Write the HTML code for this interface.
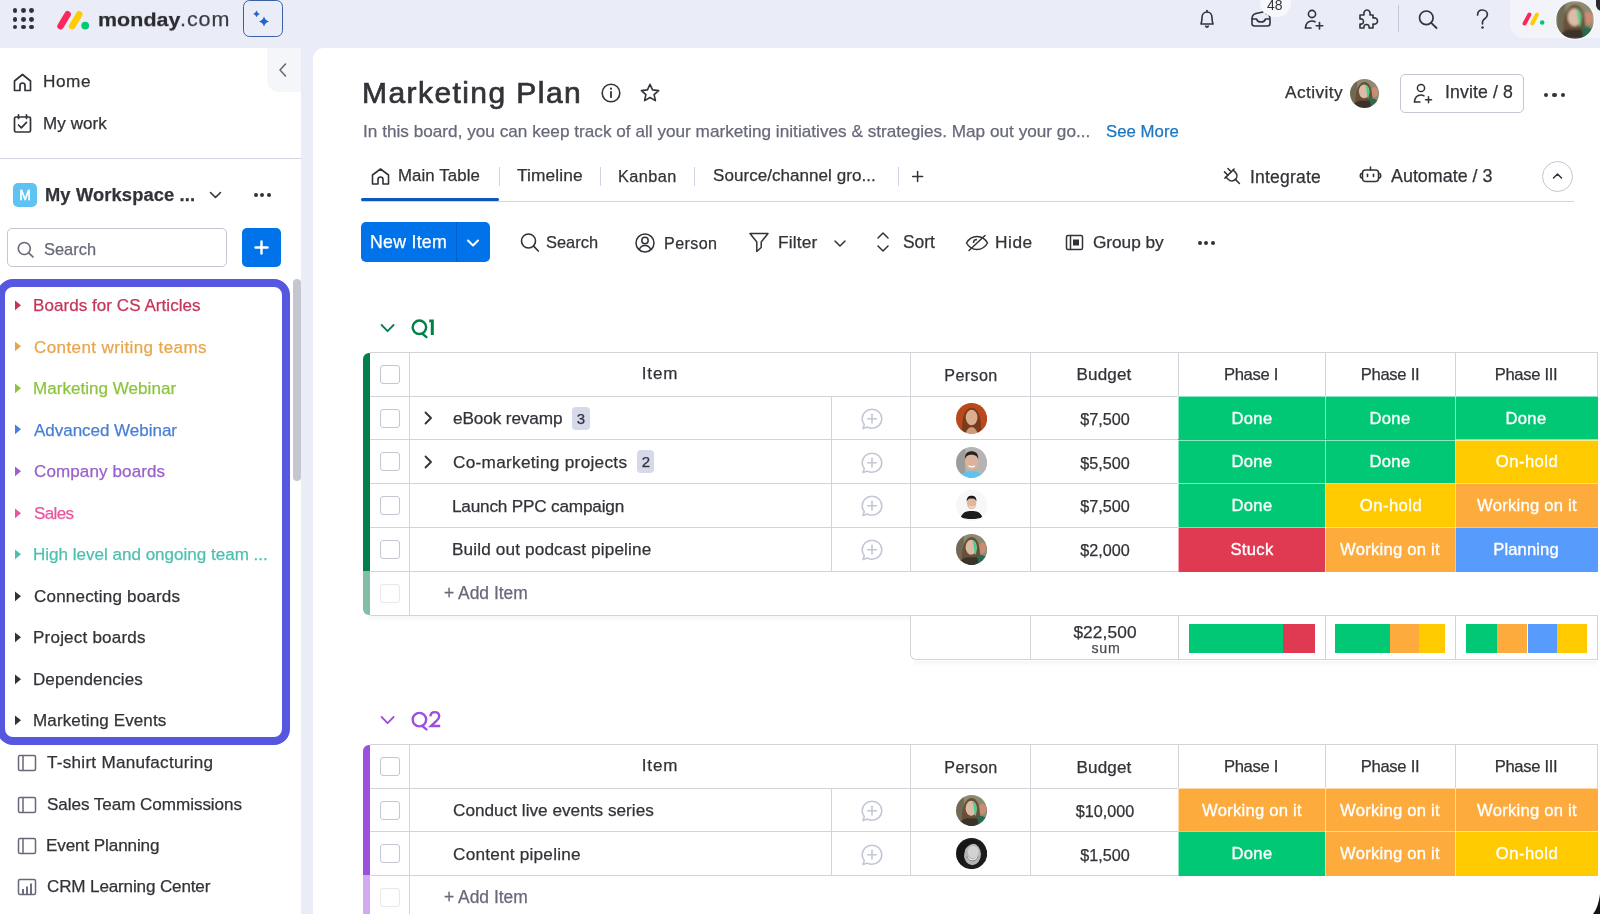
<!DOCTYPE html>
<html><head><meta charset="utf-8"><title>Marketing Plan</title>
<style>
html,body{margin:0;padding:0;width:1600px;height:914px;overflow:hidden;background:#eceff8;}
body{position:relative;font-family:"Liberation Sans",sans-serif;}
.t{position:absolute;line-height:1;white-space:nowrap;will-change:transform;-webkit-text-stroke:0.25px currentColor;}
.r{position:absolute;display:block;}
</style></head><body>
<div class="r" style="left:0.0px;top:0.0px;width:1600.0px;height:914.0px;background:#eaedf7;"></div>
<div class="r" style="left:0.0px;top:48.0px;width:301.0px;height:866.0px;background:#ffffff;"></div>
<div class="r" style="left:313.0px;top:48.0px;width:1287.0px;height:866.0px;background:#ffffff;border-top-left-radius:11px;"></div>
<div class="r" style="left:267.0px;top:48.0px;width:34.0px;height:44.0px;background:#f5f6fa;border-bottom-left-radius:12px;"></div>
<svg class="r" style="left:277.0px;top:62.0px;" width="12" height="16" viewBox="0 0 12 16"><path d="M8.5 2 L3 8 L8.5 14" fill="none" stroke="#676879" stroke-width="1.6" stroke-linecap="round" stroke-linejoin="round"/></svg>
<div class="r" style="left:12.6px;top:8.4px;width:4.8px;height:4.8px;border-radius:50%;background:#323338"></div>
<div class="r" style="left:20.9px;top:8.4px;width:4.8px;height:4.8px;border-radius:50%;background:#323338"></div>
<div class="r" style="left:29.1px;top:8.4px;width:4.8px;height:4.8px;border-radius:50%;background:#323338"></div>
<div class="r" style="left:12.6px;top:16.8px;width:4.8px;height:4.8px;border-radius:50%;background:#323338"></div>
<div class="r" style="left:20.9px;top:16.8px;width:4.8px;height:4.8px;border-radius:50%;background:#323338"></div>
<div class="r" style="left:29.1px;top:16.8px;width:4.8px;height:4.8px;border-radius:50%;background:#323338"></div>
<div class="r" style="left:12.6px;top:24.6px;width:4.8px;height:4.8px;border-radius:50%;background:#323338"></div>
<div class="r" style="left:20.9px;top:24.6px;width:4.8px;height:4.8px;border-radius:50%;background:#323338"></div>
<div class="r" style="left:29.1px;top:24.6px;width:4.8px;height:4.8px;border-radius:50%;background:#323338"></div>
<svg class="r" style="left:55.0px;top:8.0px;" width="38" height="24" viewBox="0 0 38 24"><line x1="5.6" y1="18.2" x2="12.6" y2="6.3" stroke="#fb275d" stroke-width="6.6" stroke-linecap="round"/>
<line x1="17.2" y1="18.2" x2="24.2" y2="6.3" stroke="#ffcc00" stroke-width="6.6" stroke-linecap="round"/>
<circle cx="30.2" cy="17.6" r="3.9" fill="#00ca72"/></svg>
<div class="t" style="left:97.50px;top:9.48px;font-size:21.4px;color:#2b2c31;font-weight:bold;letter-spacing:0.077px;transform:scaleY(0.86);transform-origin:0 84.6%;">monday</div>
<div class="t" style="left:179.50px;top:9.40px;font-size:21.5px;color:#3a3b40;font-weight:normal;letter-spacing:0.940px;transform:scaleY(0.92);transform-origin:0 84.6%;">.com</div>
<div class="r" style="left:243.4px;top:0.0px;width:39.2px;height:36.8px;background:transparent;border:1.9px solid #3a62a3;border-radius:6.5px;box-sizing:border-box;"></div>
<svg class="r" style="left:243.0px;top:0.0px;" width="40" height="37" viewBox="0 0 40 37"><path d="M13.5 10.5 Q14.248 13.152000000000001 16.9 13.9 Q14.248 14.648 13.5 17.3 Q12.752 14.648 10.1 13.9 Q12.752 13.152000000000001 13.5 10.5 Z" fill="#1d66cc"/><path d="M21 16.5 Q22.122 20.478 26.1 21.6 Q22.122 22.722 21 26.700000000000003 Q19.878 22.722 15.9 21.6 Q19.878 20.478 21 16.5 Z" fill="#1d66cc"/></svg>
<svg class="r" style="left:1196.0px;top:8.0px;" width="22" height="22" viewBox="0 0 22 22"><path d="M5 16 C5.5 14.5 6 13 6 9.5 C6 6.3 8.2 4 11 4 C13.8 4 16 6.3 16 9.5 C16 13 16.5 14.5 17 16 Z" fill="none" stroke="#323338" stroke-width="1.6" stroke-linejoin="round"/>
<path d="M9.5 17.5 C9.8 18.6 10.3 19.2 11 19.2 C11.7 19.2 12.2 18.6 12.5 17.5" fill="none" stroke="#323338" stroke-width="1.6"/>
<line x1="11" y1="2.5" x2="11" y2="4" stroke="#323338" stroke-width="1.6" stroke-linecap="round"/></svg>
<svg class="r" style="left:1249.0px;top:10.0px;" width="24" height="18" viewBox="0 0 24 18"><path d="M3 9 L3 13.5 C3 15 4 16 5.5 16 L18.5 16 C20 16 21 15 21 13.5 L21 9 C21 6 19.5 4 17 3.5" fill="none" stroke="#323338" stroke-width="1.6" stroke-linecap="round"/>
<path d="M7 3.5 C4.5 4 3 6 3 9 L7.5 9 C8 11 9.5 12 12 12 C14.5 12 16 11 16.5 9 L21 9" fill="none" stroke="#323338" stroke-width="1.6" stroke-linejoin="round"/>
<line x1="7" y1="3.5" x2="14" y2="2" stroke="#323338" stroke-width="1.6" stroke-linecap="round"/></svg>
<div class="r" style="left:1260.0px;top:-12.0px;width:31.0px;height:29.0px;background:#f7f8fc;border-radius:15px;"></div>
<div class="t" style="left:1266.50px;top:-1.55px;font-size:14px;color:#323338;font-weight:normal;-webkit-text-stroke:0;">48</div>
<svg class="r" style="left:1302.0px;top:8.0px;" width="24" height="22" viewBox="0 0 24 22"><circle cx="10" cy="6" r="3.6" fill="none" stroke="#323338" stroke-width="1.6"/>
<path d="M3.5 20 C3.8 15.5 6.5 13 10 13 C11.2 13 12.2 13.3 13 13.8" fill="none" stroke="#323338" stroke-width="1.6" stroke-linecap="round"/>
<line x1="3.5" y1="20" x2="9" y2="20" stroke="#323338" stroke-width="1.6" stroke-linecap="round"/>
<line x1="17.5" y1="14.5" x2="17.5" y2="21" stroke="#323338" stroke-width="1.6" stroke-linecap="round"/>
<line x1="14.2" y1="17.7" x2="20.8" y2="17.7" stroke="#323338" stroke-width="1.6" stroke-linecap="round"/></svg>
<svg class="r" style="left:1356.0px;top:7.0px;" width="24" height="24" viewBox="0 0 24 24"><path d="M4 8 L8 8 C7.5 5.5 8.5 3 11 3 C13.5 3 14.5 5.5 14 8 L17 8 L17 11 C19.5 10.5 21.5 11.5 21.5 14 C21.5 16.5 19.5 17.5 17 17 L17 21 L13 21 C13.5 19 12.5 17.5 10.5 17.5 C8.5 17.5 7.5 19 8 21 L4 21 L4 17 C6 17.5 7.5 16.5 7.5 14.5 C7.5 12.5 6 11.5 4 12 Z" fill="none" stroke="#323338" stroke-width="1.6" stroke-linejoin="round"/></svg>
<div class="r" style="left:1397.5px;top:5.0px;width:1.3px;height:27.0px;background:#c3c6d4;"></div>
<svg class="r" style="left:1416.0px;top:8.0px;" width="24" height="24" viewBox="0 0 24 24"><circle cx="10.3" cy="9.8" r="6.8" fill="none" stroke="#323338" stroke-width="1.7"/>
<line x1="15.2" y1="14.8" x2="20.5" y2="20" stroke="#323338" stroke-width="1.8" stroke-linecap="round"/></svg>
<svg class="r" style="left:1472.0px;top:7.0px;" width="20" height="24" viewBox="0 0 20 24"><path d="M5.6 8 C5.6 4.8 7.8 3 10.5 3 C13.3 3 15.4 4.9 15.4 7.6 C15.4 10.4 13.3 11.4 11.8 12.6 C10.9 13.3 10.5 14 10.5 15.2 L10.5 16.8" fill="none" stroke="#323338" stroke-width="1.7" stroke-linecap="round"/>
<circle cx="10.5" cy="20.4" r="1.25" fill="#323338"/></svg>
<div class="r" style="left:1510.0px;top:-12.0px;width:110.0px;height:49.5px;background:#f3f4fa;border-radius:14px;"></div>
<svg class="r" style="left:1521.0px;top:10.0px;" width="26" height="17" viewBox="0 0 26 17"><line x1="3.6" y1="13.5" x2="8.4" y2="4.5" stroke="#fb275d" stroke-width="4" stroke-linecap="round"/>
<line x1="11.2" y1="13.5" x2="16" y2="4.5" stroke="#ffcc00" stroke-width="4" stroke-linecap="round"/>
<circle cx="21.2" cy="12.5" r="2.3" fill="#00ca72"/></svg>
<div class="r" style="left:1555.0px;top:0.3px;width:39.5px;height:39.5px;background:#ffffff;border-radius:50%;opacity:0.7;"></div>
<svg class="r" style="left:1555.70px;top:0.80px;" width="38.00" height="38.00" viewBox="0 0 40 40"><defs><filter id="b1" x="-20%" y="-20%" width="140%" height="140%"><feGaussianBlur stdDeviation="0.9"/></filter><clipPath id="c1"><circle cx="20" cy="20" r="20"/></clipPath></defs><g clip-path="url(#c1)"><g filter="url(#b1)"><rect width="40" height="40" fill="#8d8a72"/>
<rect x="0" y="0" width="10" height="40" fill="#6f6a55"/>
<ellipse cx="34" cy="18" rx="5" ry="7" fill="#c98c74"/>
<path d="M8 40 C6 24 9 5 20 4 C30 5 32 20 30 40 Z" fill="#6a5038"/>
<ellipse cx="19.5" cy="17" rx="7.2" ry="9.5" fill="#dcbca6"/>
<path d="M21 8 C27 10 28 20 25 27 C23 26 24 16 21 8Z" fill="#45d08f"/>
<path d="M3 40 C5 32 12 29 20 30 C28 29 33 31 36 40Z" fill="#3b332c"/>
<path d="M27 27 C32 26 38 28 40 32 L40 40 L29 40Z" fill="#2c6a50"/></g></g></svg>
<div class="r" style="left:1595.5px;top:-2.0px;width:6.5px;height:13.0px;background:#2a2a30;border-radius:0 0 0 6px;"></div>
<svg class="r" style="left:12.0px;top:72.0px;" width="21" height="21" viewBox="0 0 21 21"><path d="M2.5 18.5 L2.5 9 L10.5 2.5 L18.5 9 L18.5 18.5 L13 18.5 L13 13.5 C13 12 12 11 10.5 11 C9 11 8 12 8 13.5 L8 18.5 Z" fill="none" stroke="#323338" stroke-width="1.7" stroke-linejoin="round"/></svg>
<div class="t" style="left:43.00px;top:72.84px;font-size:17.2px;color:#323338;font-weight:normal;letter-spacing:0.571px;">Home</div>
<svg class="r" style="left:12.0px;top:113.0px;" width="21" height="21" viewBox="0 0 21 21"><rect x="2.5" y="4" width="16" height="15" rx="1.5" fill="none" stroke="#323338" stroke-width="1.7"/>
<line x1="6.5" y1="1.8" x2="6.5" y2="5.5" stroke="#323338" stroke-width="1.7" stroke-linecap="round"/>
<line x1="14.5" y1="1.8" x2="14.5" y2="5.5" stroke="#323338" stroke-width="1.7" stroke-linecap="round"/>
<path d="M6.5 12 L9.3 14.8 L14.5 9.3" fill="none" stroke="#323338" stroke-width="1.7" stroke-linecap="round" stroke-linejoin="round"/></svg>
<div class="t" style="left:43.00px;top:114.81px;font-size:17px;color:#323338;font-weight:normal;letter-spacing:0.087px;">My work</div>
<div class="r" style="left:0.0px;top:158.1px;width:301.0px;height:1.2px;background:#d5d7e0;"></div>
<div class="r" style="left:13.0px;top:183.0px;width:24.0px;height:24.0px;background:#5ec2f2;border-radius:5px;"></div>
<div class="t" style="left:9.83px;width:30px;text-align:center;top:188.15px;font-size:14px;color:#ffffff;font-weight:normal;-webkit-text-stroke:0.5px #fff;">M</div>
<div class="t" style="left:45.00px;top:185.71px;font-size:18.3px;color:#323338;font-weight:bold;letter-spacing:0.139px;">My Workspace ...</div>
<svg class="r" style="left:208.0px;top:189.0px;" width="15" height="12" viewBox="0 0 15 12"><path d="M2.5 3.5 L7.5 8.5 L12.5 3.5" fill="none" stroke="#323338" stroke-width="1.6" stroke-linecap="round" stroke-linejoin="round"/></svg>
<div class="r" style="left:253.5px;top:193.2px;width:4.0px;height:4.0px;background:#323338;border-radius:50%;"></div>
<div class="r" style="left:260.3px;top:193.2px;width:4.0px;height:4.0px;background:#323338;border-radius:50%;"></div>
<div class="r" style="left:267.0px;top:193.2px;width:4.0px;height:4.0px;background:#323338;border-radius:50%;"></div>
<div class="r" style="left:7.0px;top:228.3px;width:220.3px;height:39.2px;background:#ffffff;border:1px solid #c3c6d4;border-radius:5px;box-sizing:border-box;"></div>
<svg class="r" style="left:15.0px;top:240.0px;" width="22" height="20" viewBox="0 0 22 20"><circle cx="9.3" cy="8.5" r="6" fill="none" stroke="#676879" stroke-width="1.6"/>
<line x1="13.6" y1="12.8" x2="18" y2="17" stroke="#676879" stroke-width="1.7" stroke-linecap="round"/></svg>
<div class="t" style="left:43.80px;top:240.62px;font-size:16.4px;color:#676879;font-weight:normal;letter-spacing:0.037px;">Search</div>
<div class="r" style="left:242.0px;top:227.8px;width:39.0px;height:39.7px;background:#0073ea;border-radius:5px;"></div>
<svg class="r" style="left:251.0px;top:237.0px;" width="21" height="21" viewBox="0 0 21 21"><line x1="10.5" y1="4.5" x2="10.5" y2="16.5" stroke="#fff" stroke-width="2.4" stroke-linecap="round"/>
<line x1="4.5" y1="10.5" x2="16.5" y2="10.5" stroke="#fff" stroke-width="2.4" stroke-linecap="round"/></svg>
<div class="r" style="left:293.4px;top:279.0px;width:7.3px;height:202.0px;background:#c5c7d0;border-radius:4px;"></div>
<svg class="r" style="left:14.0px;top:299.8px;" width="8" height="11" viewBox="0 0 8 11"><path d="M1 0.5 L7 5.3 L1 10.2 Z" fill="#c63558"/></svg>
<div class="t" style="left:32.90px;top:296.97px;font-size:17.05px;color:#c63558;font-weight:normal;letter-spacing:0.047px;">Boards for CS Articles</div>
<svg class="r" style="left:14.0px;top:341.4px;" width="8" height="11" viewBox="0 0 8 11"><path d="M1 0.5 L7 5.3 L1 10.2 Z" fill="#e9a54e"/></svg>
<div class="t" style="left:33.90px;top:338.52px;font-size:17.05px;color:#e9a54e;font-weight:normal;letter-spacing:0.390px;">Content writing teams</div>
<svg class="r" style="left:14.0px;top:382.9px;" width="8" height="11" viewBox="0 0 8 11"><path d="M1 0.5 L7 5.3 L1 10.2 Z" fill="#8cc43e"/></svg>
<div class="t" style="left:32.90px;top:380.07px;font-size:17.05px;color:#8cc43e;font-weight:normal;letter-spacing:0.028px;">Marketing Webinar</div>
<svg class="r" style="left:14.0px;top:424.4px;" width="8" height="11" viewBox="0 0 8 11"><path d="M1 0.5 L7 5.3 L1 10.2 Z" fill="#4a7fd6"/></svg>
<div class="t" style="left:33.90px;top:421.62px;font-size:17.05px;color:#4a7fd6;font-weight:normal;letter-spacing:-0.041px;">Advanced Webinar</div>
<svg class="r" style="left:14.0px;top:466.0px;" width="8" height="11" viewBox="0 0 8 11"><path d="M1 0.5 L7 5.3 L1 10.2 Z" fill="#9a5fcc"/></svg>
<div class="t" style="left:33.90px;top:463.17px;font-size:17.05px;color:#9a5fcc;font-weight:normal;letter-spacing:0.109px;">Company boards</div>
<svg class="r" style="left:14.0px;top:507.5px;" width="8" height="11" viewBox="0 0 8 11"><path d="M1 0.5 L7 5.3 L1 10.2 Z" fill="#e8569f"/></svg>
<div class="t" style="left:33.90px;top:504.72px;font-size:17.05px;color:#e8569f;font-weight:normal;letter-spacing:-0.647px;">Sales</div>
<svg class="r" style="left:14.0px;top:549.1px;" width="8" height="11" viewBox="0 0 8 11"><path d="M1 0.5 L7 5.3 L1 10.2 Z" fill="#4cc0b0"/></svg>
<div class="t" style="left:32.90px;top:546.27px;font-size:17.05px;color:#4cc0b0;font-weight:normal;letter-spacing:-0.002px;">High level and ongoing team ...</div>
<svg class="r" style="left:14.0px;top:590.6px;" width="8" height="11" viewBox="0 0 8 11"><path d="M1 0.5 L7 5.3 L1 10.2 Z" fill="#323338"/></svg>
<div class="t" style="left:33.90px;top:587.82px;font-size:17.05px;color:#323338;font-weight:normal;letter-spacing:0.190px;">Connecting boards</div>
<svg class="r" style="left:14.0px;top:632.2px;" width="8" height="11" viewBox="0 0 8 11"><path d="M1 0.5 L7 5.3 L1 10.2 Z" fill="#323338"/></svg>
<div class="t" style="left:32.90px;top:629.37px;font-size:17.05px;color:#323338;font-weight:normal;letter-spacing:0.208px;">Project boards</div>
<svg class="r" style="left:14.0px;top:673.8px;" width="8" height="11" viewBox="0 0 8 11"><path d="M1 0.5 L7 5.3 L1 10.2 Z" fill="#323338"/></svg>
<div class="t" style="left:32.90px;top:670.92px;font-size:17.05px;color:#323338;font-weight:normal;letter-spacing:0.075px;">Dependencies</div>
<svg class="r" style="left:14.0px;top:715.3px;" width="8" height="11" viewBox="0 0 8 11"><path d="M1 0.5 L7 5.3 L1 10.2 Z" fill="#323338"/></svg>
<div class="t" style="left:32.90px;top:712.47px;font-size:17.05px;color:#323338;font-weight:normal;letter-spacing:0.116px;">Marketing Events</div>
<div class="r" style="left:-3.0px;top:279.0px;width:292.5px;height:466.3px;background:transparent;border:8px solid #5657e0;border-radius:16px;box-sizing:border-box;"></div>
<svg class="r" style="left:16.5px;top:754.2px;" width="21" height="18" viewBox="0 0 21 18"><rect x="1.5" y="1.5" width="17" height="15" rx="1.5" fill="none" stroke="#676879" stroke-width="1.5"/>
<line x1="6" y1="1.5" x2="6" y2="16.5" stroke="#676879" stroke-width="1.5"/></svg>
<div class="t" style="left:47.10px;top:754.22px;font-size:17.1px;color:#323338;font-weight:normal;letter-spacing:0.273px;">T-shirt Manufacturing</div>
<svg class="r" style="left:16.5px;top:795.6px;" width="21" height="18" viewBox="0 0 21 18"><rect x="1.5" y="1.5" width="17" height="15" rx="1.5" fill="none" stroke="#676879" stroke-width="1.5"/>
<line x1="6" y1="1.5" x2="6" y2="16.5" stroke="#676879" stroke-width="1.5"/></svg>
<div class="t" style="left:47.10px;top:795.62px;font-size:17.1px;color:#323338;font-weight:normal;letter-spacing:-0.061px;">Sales Team Commissions</div>
<svg class="r" style="left:16.5px;top:837.0px;" width="21" height="18" viewBox="0 0 21 18"><rect x="1.5" y="1.5" width="17" height="15" rx="1.5" fill="none" stroke="#676879" stroke-width="1.5"/>
<line x1="6" y1="1.5" x2="6" y2="16.5" stroke="#676879" stroke-width="1.5"/></svg>
<div class="t" style="left:46.10px;top:837.02px;font-size:17.1px;color:#323338;font-weight:normal;letter-spacing:-0.114px;">Event Planning</div>
<svg class="r" style="left:16.5px;top:878.4px;" width="21" height="18" viewBox="0 0 21 18"><rect x="1.5" y="1.5" width="17" height="15" rx="1.5" fill="none" stroke="#676879" stroke-width="1.5"/>
<line x1="6" y1="16" x2="6" y2="11" stroke="#676879" stroke-width="1.9"/>
<line x1="10" y1="16" x2="10" y2="8.5" stroke="#676879" stroke-width="1.9"/>
<line x1="14" y1="16" x2="14" y2="5.5" stroke="#676879" stroke-width="1.9"/></svg>
<div class="t" style="left:47.10px;top:878.42px;font-size:17.1px;color:#323338;font-weight:normal;letter-spacing:-0.160px;">CRM Learning Center</div>
<div class="t" style="left:361.60px;top:78.01px;font-size:30px;color:#323338;font-weight:normal;letter-spacing:1.430px;-webkit-text-stroke:0.7px #323338;">Marketing Plan</div>
<svg class="r" style="left:600.0px;top:82.0px;" width="22" height="22" viewBox="0 0 22 22"><circle cx="11" cy="11" r="8.8" fill="none" stroke="#323338" stroke-width="1.6"/>
<line x1="11" y1="9.8" x2="11" y2="15.2" stroke="#323338" stroke-width="1.8" stroke-linecap="round"/>
<circle cx="11" cy="6.7" r="1.1" fill="#323338"/></svg>
<svg class="r" style="left:639.0px;top:82.0px;" width="22" height="22" viewBox="0 0 22 22"><path d="M11 2.3 L13.6 7.9 L19.6 8.6 L15.1 12.6 L16.4 18.6 L11 15.5 L5.6 18.6 L6.9 12.6 L2.4 8.6 L8.4 7.9 Z" fill="none" stroke="#323338" stroke-width="1.6" stroke-linejoin="round"/></svg>
<div class="t" style="left:363.00px;top:123.28px;font-size:17.15px;color:#676879;font-weight:normal;letter-spacing:0.023px;">In this board, you can keep track of all your marketing initiatives &amp; strategies. Map out your go...</div>
<div class="t" style="left:1106.00px;top:123.62px;font-size:16.75px;color:#1f76c2;font-weight:normal;letter-spacing:0.042px;">See More</div>
<div class="t" style="left:1285.00px;top:84.16px;font-size:17.3px;color:#323338;font-weight:normal;letter-spacing:0.416px;">Activity</div>
<svg class="r" style="left:1350.00px;top:79.00px;" width="29.00" height="29.00" viewBox="0 0 40 40"><defs><filter id="b2" x="-20%" y="-20%" width="140%" height="140%"><feGaussianBlur stdDeviation="0.9"/></filter><clipPath id="c2"><circle cx="20" cy="20" r="20"/></clipPath></defs><g clip-path="url(#c2)"><g filter="url(#b2)"><rect width="40" height="40" fill="#8d8a72"/>
<rect x="0" y="0" width="10" height="40" fill="#6f6a55"/>
<ellipse cx="34" cy="18" rx="5" ry="7" fill="#c98c74"/>
<path d="M8 40 C6 24 9 5 20 4 C30 5 32 20 30 40 Z" fill="#6a5038"/>
<ellipse cx="19.5" cy="17" rx="7.2" ry="9.5" fill="#dcbca6"/>
<path d="M21 8 C27 10 28 20 25 27 C23 26 24 16 21 8Z" fill="#45d08f"/>
<path d="M3 40 C5 32 12 29 20 30 C28 29 33 31 36 40Z" fill="#3b332c"/>
<path d="M27 27 C32 26 38 28 40 32 L40 40 L29 40Z" fill="#2c6a50"/></g></g></svg>
<div class="r" style="left:1400.4px;top:74.0px;width:124.0px;height:38.6px;background:#ffffff;border:1px solid #c3c6d4;border-radius:5px;box-sizing:border-box;"></div>
<svg class="r" style="left:1411.0px;top:82.0px;" width="24" height="22" viewBox="0 0 24 22"><circle cx="10" cy="6" r="3.6" fill="none" stroke="#323338" stroke-width="1.5"/>
<path d="M3.5 20 C3.8 15.5 6.5 13 10 13 C11.2 13 12.2 13.3 13 13.8" fill="none" stroke="#323338" stroke-width="1.5" stroke-linecap="round"/>
<line x1="3.5" y1="20" x2="9" y2="20" stroke="#323338" stroke-width="1.5" stroke-linecap="round"/>
<line x1="17.5" y1="14.8" x2="17.5" y2="20.8" stroke="#323338" stroke-width="1.5" stroke-linecap="round"/>
<line x1="14.5" y1="17.8" x2="20.5" y2="17.8" stroke="#323338" stroke-width="1.5" stroke-linecap="round"/></svg>
<div class="t" style="left:1445.00px;top:83.82px;font-size:17.7px;color:#323338;font-weight:normal;letter-spacing:0.109px;">Invite / 8</div>
<div class="r" style="left:1543.9px;top:92.9px;width:4.2px;height:4.2px;background:#323338;border-radius:50%;"></div>
<div class="r" style="left:1552.4px;top:92.9px;width:4.2px;height:4.2px;background:#323338;border-radius:50%;"></div>
<div class="r" style="left:1560.9px;top:92.9px;width:4.2px;height:4.2px;background:#323338;border-radius:50%;"></div>
<svg class="r" style="left:370.0px;top:167.0px;" width="21" height="19" viewBox="0 0 21 19"><path d="M2.5 17 L2.5 8 L10.5 2 L18.5 8 L18.5 17 L13 17 L13 12.5 C13 11 12 10 10.5 10 C9 10 8 11 8 12.5 L8 17 Z" fill="none" stroke="#323338" stroke-width="1.6" stroke-linejoin="round"/></svg>
<div class="t" style="left:398.00px;top:167.58px;font-size:16.8px;color:#323338;font-weight:normal;letter-spacing:0.109px;">Main Table</div>
<div class="r" style="left:499.0px;top:167.0px;width:1.2px;height:18.6px;background:#d0d4e4;"></div>
<div class="t" style="left:517.00px;top:167.11px;font-size:17.35px;color:#323338;font-weight:normal;letter-spacing:0.107px;">Timeline</div>
<div class="r" style="left:600.3px;top:167.0px;width:1.2px;height:18.6px;background:#d0d4e4;"></div>
<div class="t" style="left:618.30px;top:168.00px;font-size:16.3px;color:#323338;font-weight:normal;letter-spacing:0.424px;">Kanban</div>
<div class="r" style="left:694.0px;top:167.0px;width:1.2px;height:18.6px;background:#d0d4e4;"></div>
<div class="t" style="left:712.70px;top:167.37px;font-size:17.05px;color:#323338;font-weight:normal;letter-spacing:0.042px;">Source/channel gro...</div>
<div class="r" style="left:898.2px;top:167.0px;width:1.2px;height:18.6px;background:#d0d4e4;"></div>
<svg class="r" style="left:910.0px;top:169.0px;" width="15" height="15" viewBox="0 0 15 15"><line x1="7.6" y1="2.5" x2="7.6" y2="12.5" stroke="#323338" stroke-width="1.5" stroke-linecap="round"/>
<line x1="2.6" y1="7.5" x2="12.6" y2="7.5" stroke="#323338" stroke-width="1.5" stroke-linecap="round"/></svg>
<div class="r" style="left:360.6px;top:200.6px;width:1213.2px;height:1.4px;background:#d4d5db;"></div>
<div class="r" style="left:360.6px;top:198.1px;width:138.4px;height:3.1px;background:#0b57c0;border-radius:2px;"></div>
<svg class="r" style="left:1220.0px;top:163.5px;" width="24" height="24" viewBox="0 0 24 24"><g transform="rotate(-45 12 12)" fill="none" stroke="#323338" stroke-width="1.5" stroke-linecap="round" stroke-linejoin="round">
<line x1="5.5" y1="8.5" x2="18.5" y2="8.5"/>
<path d="M7 8.5 V11.5 C7 14.8 9.3 16.8 12 16.8 C14.7 16.8 17 14.8 17 11.5 V8.5"/>
<line x1="9.6" y1="8.5" x2="9.6" y2="3.8"/><line x1="14.4" y1="8.5" x2="14.4" y2="3.8"/>
<line x1="12" y1="16.8" x2="12" y2="22.5"/></g></svg>
<div class="t" style="left:1250.00px;top:168.69px;font-size:17.5px;color:#323338;font-weight:normal;letter-spacing:0.207px;">Integrate</div>
<svg class="r" style="left:1358.0px;top:164.5px;" width="25" height="20" viewBox="0 0 25 20"><rect x="4.5" y="5" width="16" height="11.5" rx="3" fill="none" stroke="#323338" stroke-width="1.5"/>
<line x1="12.5" y1="2" x2="12.5" y2="5" stroke="#323338" stroke-width="1.5" stroke-linecap="round"/>
<path d="M4.5 8.3 C2.8 8.3 2.3 9.5 2.3 10.7 C2.3 11.9 2.8 13.1 4.5 13.1" fill="none" stroke="#323338" stroke-width="1.5"/>
<path d="M20.5 8.3 C22.2 8.3 22.7 9.5 22.7 10.7 C22.7 11.9 22.2 13.1 20.5 13.1" fill="none" stroke="#323338" stroke-width="1.5"/>
<line x1="9.5" y1="9.3" x2="9.5" y2="11.5" stroke="#323338" stroke-width="1.6" stroke-linecap="round"/><line x1="15.5" y1="9.3" x2="15.5" y2="11.5" stroke="#323338" stroke-width="1.6" stroke-linecap="round"/></svg>
<div class="t" style="left:1391.00px;top:168.35px;font-size:17.9px;color:#323338;font-weight:normal;letter-spacing:0.001px;">Automate / 3</div>
<div class="r" style="left:1542.0px;top:160.5px;width:31.0px;height:31.0px;background:#ffffff;border:1px solid #c3c6d4;border-radius:50%;box-sizing:border-box;"></div>
<svg class="r" style="left:1550.0px;top:169.0px;" width="15" height="14" viewBox="0 0 15 14"><path d="M3.5 9 L7.5 5 L11.5 9" fill="none" stroke="#323338" stroke-width="1.5" stroke-linecap="round" stroke-linejoin="round"/></svg>
<div class="r" style="left:360.5px;top:222.0px;width:129.5px;height:40.0px;background:#0073ea;border-radius:5px;"></div>
<div class="r" style="left:455.5px;top:222.0px;width:1.3px;height:40.0px;background:#0060c4;"></div>
<div class="t" style="left:370.00px;top:233.57px;font-size:17.75px;color:#ffffff;font-weight:normal;letter-spacing:0.261px;">New Item</div>
<svg class="r" style="left:465.0px;top:236.0px;" width="16" height="14" viewBox="0 0 16 14"><path d="M3 4.5 L8 9.5 L13 4.5" fill="none" stroke="#ffffff" stroke-width="2" stroke-linecap="round" stroke-linejoin="round"/></svg>
<svg class="r" style="left:518.0px;top:231.0px;" width="24" height="24" viewBox="0 0 24 24"><circle cx="10.5" cy="10" r="7" fill="none" stroke="#323338" stroke-width="1.6"/>
<line x1="15.6" y1="15.2" x2="20.3" y2="20" stroke="#323338" stroke-width="1.7" stroke-linecap="round"/></svg>
<div class="t" style="left:545.50px;top:234.42px;font-size:16.4px;color:#323338;font-weight:normal;letter-spacing:0.037px;">Search</div>
<svg class="r" style="left:633.0px;top:231.0px;" width="24" height="24" viewBox="0 0 24 24"><circle cx="12" cy="12" r="9" fill="none" stroke="#323338" stroke-width="1.5"/>
<circle cx="12" cy="9.5" r="3.2" fill="none" stroke="#323338" stroke-width="1.5"/>
<path d="M6.3 18.8 C7.2 15.8 9.3 14.5 12 14.5 C14.7 14.5 16.8 15.8 17.7 18.8" fill="none" stroke="#323338" stroke-width="1.5"/></svg>
<div class="t" style="left:664.00px;top:234.67px;font-size:16.1px;color:#323338;font-weight:normal;letter-spacing:0.392px;">Person</div>
<svg class="r" style="left:747.0px;top:230.0px;" width="24" height="25" viewBox="0 0 24 25"><path d="M3 3.5 L21 3.5 L14.2 12 L14.2 17.5 L9.8 21.5 L9.8 12 Z" fill="none" stroke="#323338" stroke-width="1.5" stroke-linejoin="round"/></svg>
<div class="t" style="left:778.00px;top:233.66px;font-size:17.3px;color:#323338;font-weight:normal;letter-spacing:0.171px;">Filter</div>
<svg class="r" style="left:832.0px;top:238.0px;" width="16" height="11" viewBox="0 0 16 11"><path d="M3 3 L8 8 L13 3" fill="none" stroke="#323338" stroke-width="1.5" stroke-linecap="round" stroke-linejoin="round"/></svg>
<svg class="r" style="left:873.0px;top:230.0px;" width="20" height="24" viewBox="0 0 20 24"><path d="M5 8 L10 3 L15 8" fill="none" stroke="#323338" stroke-width="1.5" stroke-linecap="round" stroke-linejoin="round"/>
<path d="M5 16 L10 21 L15 16" fill="none" stroke="#323338" stroke-width="1.5" stroke-linecap="round" stroke-linejoin="round"/></svg>
<div class="t" style="left:902.50px;top:233.53px;font-size:17.45px;color:#323338;font-weight:normal;letter-spacing:-0.045px;">Sort</div>
<svg class="r" style="left:964.0px;top:233.0px;" width="26" height="20" viewBox="0 0 26 20"><path d="M2.5 10 C5 5.5 8.5 3.5 13 3.5 C17.5 3.5 21 5.5 23.5 10 C21 14.5 17.5 16.5 13 16.5 C8.5 16.5 5 14.5 2.5 10 Z" fill="none" stroke="#323338" stroke-width="1.5"/>
<path d="M9.5 10 C9.5 8 11 6.5 13 6.5" fill="none" stroke="#323338" stroke-width="1.5"/>
<line x1="5" y1="17.5" x2="21" y2="2.5" stroke="#323338" stroke-width="1.5" stroke-linecap="round"/></svg>
<div class="t" style="left:995.00px;top:233.66px;font-size:17.3px;color:#323338;font-weight:normal;letter-spacing:0.557px;">Hide</div>
<svg class="r" style="left:1064.0px;top:233.0px;" width="21" height="19" viewBox="0 0 21 19"><rect x="2.5" y="2.5" width="16" height="14" rx="1.5" fill="none" stroke="#323338" stroke-width="1.5"/>
<line x1="6.5" y1="2.5" x2="6.5" y2="16.5" stroke="#323338" stroke-width="1.5"/>
<rect x="9" y="6.5" width="6" height="6" fill="#323338"/></svg>
<div class="t" style="left:1093.00px;top:233.70px;font-size:17.25px;color:#323338;font-weight:normal;letter-spacing:-0.047px;">Group by</div>
<div class="r" style="left:1197.5px;top:241.0px;width:4.0px;height:4.0px;background:#323338;border-radius:50%;"></div>
<div class="r" style="left:1204.3px;top:241.0px;width:4.0px;height:4.0px;background:#323338;border-radius:50%;"></div>
<div class="r" style="left:1211.1px;top:241.0px;width:4.0px;height:4.0px;background:#323338;border-radius:50%;"></div>
<svg class="r" style="left:379.0px;top:321.5px;" width="17" height="12" viewBox="0 0 17 12"><path d="M2.6 3 L8.6 9.2 L14.6 3" fill="none" stroke="#037f4c" stroke-width="1.8" stroke-linecap="round" stroke-linejoin="round"/></svg>
<svg class="r" style="left:0;top:0;" width="460" height="352.5" viewBox="0 0 460 352.5"><circle cx="419.4" cy="327.3" r="6.75" fill="none" stroke="#037f4c" stroke-width="2.4"/><line x1="422.3" y1="333.7" x2="426.4" y2="337.1" stroke="#037f4c" stroke-width="2.4" stroke-linecap="round"/><path d="M429.2 319.5 L433.8 319.5 L433.8 335.0 L430.8 335.0 L430.8 322.2 L429.2 322.2 Z" fill="#037f4c"/></svg>
<div class="r" style="left:363.0px;top:352.5px;width:7.0px;height:218.8px;background:#037f4c;border-top-left-radius:6px;"></div>
<div class="r" style="left:363.0px;top:571.3px;width:7.0px;height:43.9px;background:#80bfa5;border-bottom-left-radius:6px;"></div>
<div class="r" style="left:370.0px;top:352.0px;width:1228.2px;height:1.2px;background:#d3d4da;"></div>
<div class="r" style="left:370.0px;top:396.0px;width:1228.2px;height:1.2px;background:#d3d4da;"></div>
<div class="r" style="left:370.0px;top:439.0px;width:1228.2px;height:1.2px;background:#d3d4da;"></div>
<div class="r" style="left:370.0px;top:483.0px;width:1228.2px;height:1.2px;background:#d3d4da;"></div>
<div class="r" style="left:370.0px;top:527.0px;width:1228.2px;height:1.2px;background:#d3d4da;"></div>
<div class="r" style="left:370.0px;top:571.0px;width:1228.2px;height:1.2px;background:#d3d4da;"></div>
<div class="r" style="left:370.0px;top:615.0px;width:1228.2px;height:1.2px;background:#d3d4da;"></div>
<div class="r" style="left:409.0px;top:352.5px;width:1.2px;height:218.8px;background:#d3d4da;"></div>
<div class="r" style="left:910.0px;top:352.5px;width:1.2px;height:218.8px;background:#d3d4da;"></div>
<div class="r" style="left:1030.0px;top:352.5px;width:1.2px;height:218.8px;background:#d3d4da;"></div>
<div class="r" style="left:1178.0px;top:352.5px;width:1.2px;height:218.8px;background:#d3d4da;"></div>
<div class="r" style="left:1325.0px;top:352.5px;width:1.2px;height:218.8px;background:#d3d4da;"></div>
<div class="r" style="left:1455.0px;top:352.5px;width:1.2px;height:218.8px;background:#d3d4da;"></div>
<div class="r" style="left:1597.0px;top:352.5px;width:1.2px;height:218.8px;background:#d3d4da;"></div>
<div class="r" style="left:409.0px;top:571.3px;width:1.2px;height:43.9px;background:#d3d4da;"></div>
<div class="r" style="left:831.0px;top:396.6px;width:1.2px;height:43.4px;background:#d3d4da;"></div>
<div class="r" style="left:831.0px;top:440.0px;width:1.2px;height:43.5px;background:#d3d4da;"></div>
<div class="r" style="left:831.0px;top:483.5px;width:1.2px;height:43.9px;background:#d3d4da;"></div>
<div class="r" style="left:831.0px;top:527.4px;width:1.2px;height:43.9px;background:#d3d4da;"></div>
<div class="r" style="left:380.3px;top:364.9px;width:19.3px;height:19.2px;background:#ffffff;border:1px solid #c5c7d0;border-radius:3px;box-sizing:border-box;"></div>
<div class="r" style="left:380.3px;top:408.7px;width:19.3px;height:19.2px;background:#ffffff;border:1px solid #c5c7d0;border-radius:3px;box-sizing:border-box;"></div>
<div class="r" style="left:380.3px;top:452.1px;width:19.3px;height:19.2px;background:#ffffff;border:1px solid #c5c7d0;border-radius:3px;box-sizing:border-box;"></div>
<div class="r" style="left:380.3px;top:495.8px;width:19.3px;height:19.2px;background:#ffffff;border:1px solid #c5c7d0;border-radius:3px;box-sizing:border-box;"></div>
<div class="r" style="left:380.3px;top:539.7px;width:19.3px;height:19.2px;background:#ffffff;border:1px solid #c5c7d0;border-radius:3px;box-sizing:border-box;"></div>
<div class="r" style="left:380.3px;top:583.6px;width:19.3px;height:19.2px;background:#ffffff;border:1px solid #e6e8ef;border-radius:3px;box-sizing:border-box;"></div>
<div class="t" style="left:510.00px;width:300px;text-align:center;top:364.81px;font-size:17px;color:#323338;font-weight:normal;letter-spacing:0.833px;">Item</div>
<div class="t" style="left:820.87px;width:300px;text-align:center;top:366.67px;font-size:16.1px;color:#323338;font-weight:normal;letter-spacing:0.392px;">Person</div>
<div class="t" style="left:954.04px;width:300px;text-align:center;top:366.37px;font-size:17.05px;color:#323338;font-weight:normal;letter-spacing:0.150px;">Budget</div>
<div class="t" style="left:1101.35px;width:300px;text-align:center;top:366.75px;font-size:16.6px;color:#323338;font-weight:normal;letter-spacing:-0.310px;">Phase I</div>
<div class="t" style="left:1240.06px;width:300px;text-align:center;top:366.75px;font-size:16.6px;color:#323338;font-weight:normal;letter-spacing:-0.282px;">Phase II</div>
<div class="t" style="left:1376.34px;width:300px;text-align:center;top:366.75px;font-size:16.6px;color:#323338;font-weight:normal;letter-spacing:-0.323px;">Phase III</div>
<svg class="r" style="left:421.0px;top:410.3px;" width="14" height="16" viewBox="0 0 14 16"><path d="M4.5 2.5 L10 8 L4.5 13.5" fill="none" stroke="#323338" stroke-width="1.8" stroke-linecap="round" stroke-linejoin="round"/></svg>
<div class="t" style="left:452.70px;top:410.44px;font-size:17.2px;color:#323338;font-weight:normal;letter-spacing:-0.115px;">eBook revamp</div>
<div class="r" style="left:572.3px;top:406.7px;width:17.5px;height:23.4px;background:#d6d9ea;border-radius:4px;"></div>
<div class="t" style="left:571.22px;width:20px;text-align:center;top:411.00px;font-size:15px;color:#323338;font-weight:normal;">3</div>
<svg class="r" style="left:858.7px;top:406.3px;" width="26" height="26" viewBox="0 0 26 26"><path d="M13 3.2 C18.6 3.2 22.8 7.4 22.8 12.7 C22.8 18 18.6 22.2 13 22.2 C11.3 22.2 9.8 21.8 8.4 21.1 L4 22.6 L5.3 18.6 C4 17 3.2 14.9 3.2 12.7 C3.2 7.4 7.4 3.2 13 3.2 Z" fill="none" stroke="#c3c6d4" stroke-width="1.6" stroke-linejoin="round"/>
<line x1="13" y1="8.3" x2="13" y2="17" stroke="#c3c6d4" stroke-width="1.6" stroke-linecap="round"/>
<line x1="8.6" y1="12.7" x2="17.4" y2="12.7" stroke="#c3c6d4" stroke-width="1.6" stroke-linecap="round"/></svg>
<svg class="r" style="left:955.70px;top:403.20px;" width="31.20" height="31.20" viewBox="0 0 40 40"><defs><filter id="b3" x="-20%" y="-20%" width="140%" height="140%"><feGaussianBlur stdDeviation="0.9"/></filter><clipPath id="c3"><circle cx="20" cy="20" r="20"/></clipPath></defs><g clip-path="url(#c3)"><g filter="url(#b3)"><rect width="40" height="40" fill="#b94a1e"/>
<path d="M8 40 C7 24 9 7 20 6 C31 7 33 24 32 40 Z" fill="#7a3b1f"/>
<ellipse cx="20" cy="18.5" rx="7.5" ry="10" fill="#dcae90"/>
<path d="M12 40 C14 33 17 31 20 31 C23 31 26 33 28 40Z" fill="#d19a78"/></g></g></svg>
<div class="t" style="left:954.50px;width:300px;text-align:center;top:411.29px;font-size:16.2px;color:#323338;font-weight:normal;">$7,500</div>
<div class="r" style="left:1178.0px;top:396.0px;width:147.9px;height:44.6px;background:#00c875;"></div>
<div class="r" style="left:1178.1px;top:396.1px;width:1.0px;height:44.4px;background:rgba(255,255,255,0.55);"></div>
<div class="r" style="left:1178.1px;top:396.1px;width:147.7px;height:1.0px;background:rgba(255,255,255,0.55);"></div>
<div class="t" style="left:1101.76px;width:300px;text-align:center;top:410.95px;font-size:16.6px;color:#ffffff;font-weight:normal;letter-spacing:0.386px;-webkit-text-stroke:0.35px #ffffff;">Done</div>
<div class="r" style="left:1324.7px;top:396.0px;width:131.6px;height:44.6px;background:#00c875;"></div>
<div class="r" style="left:1324.8px;top:396.1px;width:1.0px;height:44.4px;background:rgba(255,255,255,0.55);"></div>
<div class="r" style="left:1324.8px;top:396.1px;width:131.4px;height:1.0px;background:rgba(255,255,255,0.55);"></div>
<div class="t" style="left:1240.31px;width:300px;text-align:center;top:410.95px;font-size:16.6px;color:#ffffff;font-weight:normal;letter-spacing:0.386px;-webkit-text-stroke:0.35px #ffffff;">Done</div>
<div class="r" style="left:1455.1px;top:396.0px;width:143.1px;height:44.6px;background:#00c875;"></div>
<div class="r" style="left:1455.2px;top:396.1px;width:1.0px;height:44.4px;background:rgba(255,255,255,0.55);"></div>
<div class="r" style="left:1455.2px;top:396.1px;width:142.9px;height:1.0px;background:rgba(255,255,255,0.55);"></div>
<div class="t" style="left:1376.46px;width:300px;text-align:center;top:410.95px;font-size:16.6px;color:#ffffff;font-weight:normal;letter-spacing:0.386px;-webkit-text-stroke:0.35px #ffffff;">Done</div>
<svg class="r" style="left:421.0px;top:453.8px;" width="14" height="16" viewBox="0 0 14 16"><path d="M4.5 2.5 L10 8 L4.5 13.5" fill="none" stroke="#323338" stroke-width="1.8" stroke-linecap="round" stroke-linejoin="round"/></svg>
<div class="t" style="left:452.70px;top:453.89px;font-size:17.2px;color:#323338;font-weight:normal;letter-spacing:0.294px;">Co-marketing projects</div>
<div class="r" style="left:636.9px;top:450.1px;width:17.5px;height:23.4px;background:#d6d9ea;border-radius:4px;"></div>
<div class="t" style="left:635.82px;width:20px;text-align:center;top:454.45px;font-size:15px;color:#323338;font-weight:normal;">2</div>
<svg class="r" style="left:858.7px;top:449.8px;" width="26" height="26" viewBox="0 0 26 26"><path d="M13 3.2 C18.6 3.2 22.8 7.4 22.8 12.7 C22.8 18 18.6 22.2 13 22.2 C11.3 22.2 9.8 21.8 8.4 21.1 L4 22.6 L5.3 18.6 C4 17 3.2 14.9 3.2 12.7 C3.2 7.4 7.4 3.2 13 3.2 Z" fill="none" stroke="#c3c6d4" stroke-width="1.6" stroke-linejoin="round"/>
<line x1="13" y1="8.3" x2="13" y2="17" stroke="#c3c6d4" stroke-width="1.6" stroke-linecap="round"/>
<line x1="8.6" y1="12.7" x2="17.4" y2="12.7" stroke="#c3c6d4" stroke-width="1.6" stroke-linecap="round"/></svg>
<svg class="r" style="left:955.70px;top:446.65px;" width="31.20" height="31.20" viewBox="0 0 40 40"><defs><filter id="b4" x="-20%" y="-20%" width="140%" height="140%"><feGaussianBlur stdDeviation="0.9"/></filter><clipPath id="c4"><circle cx="20" cy="20" r="20"/></clipPath></defs><g clip-path="url(#c4)"><g filter="url(#b4)"><rect width="40" height="40" fill="#b5b4b3"/>
<rect x="0" y="0" width="12" height="40" fill="#9d9c9b"/>
<ellipse cx="20" cy="19" rx="8.5" ry="10.5" fill="#dcb29a"/>
<path d="M11.5 16 C11 8 15 5.5 20 5.5 C25 5.5 29 8 28.5 16 C27 11 24 10 20 10 C16 10 13 11 11.5 16Z" fill="#2a2420"/>
<path d="M16 24 C18 26 22 26 24 24" stroke="#ffffff" stroke-width="1.6" fill="none"/>
<path d="M4 40 C7 33 13 31 20 31 C27 31 33 33 36 40Z" fill="#5cc3ea"/></g></g></svg>
<div class="t" style="left:954.50px;width:300px;text-align:center;top:454.74px;font-size:16.2px;color:#323338;font-weight:normal;">$5,500</div>
<div class="r" style="left:1178.0px;top:439.4px;width:147.9px;height:44.7px;background:#00c875;"></div>
<div class="r" style="left:1178.1px;top:439.5px;width:1.0px;height:44.5px;background:rgba(255,255,255,0.55);"></div>
<div class="r" style="left:1178.1px;top:439.5px;width:147.7px;height:1.0px;background:rgba(255,255,255,0.55);"></div>
<div class="t" style="left:1101.76px;width:300px;text-align:center;top:454.40px;font-size:16.6px;color:#ffffff;font-weight:normal;letter-spacing:0.386px;-webkit-text-stroke:0.35px #ffffff;">Done</div>
<div class="r" style="left:1324.7px;top:439.4px;width:131.6px;height:44.7px;background:#00c875;"></div>
<div class="r" style="left:1324.8px;top:439.5px;width:1.0px;height:44.5px;background:rgba(255,255,255,0.55);"></div>
<div class="r" style="left:1324.8px;top:439.5px;width:131.4px;height:1.0px;background:rgba(255,255,255,0.55);"></div>
<div class="t" style="left:1240.31px;width:300px;text-align:center;top:454.40px;font-size:16.6px;color:#ffffff;font-weight:normal;letter-spacing:0.386px;-webkit-text-stroke:0.35px #ffffff;">Done</div>
<div class="r" style="left:1455.1px;top:439.4px;width:143.1px;height:44.7px;background:#ffcb00;"></div>
<div class="r" style="left:1455.2px;top:439.5px;width:1.0px;height:44.5px;background:rgba(255,255,255,0.55);"></div>
<div class="r" style="left:1455.2px;top:439.5px;width:142.9px;height:1.0px;background:rgba(255,255,255,0.55);"></div>
<div class="t" style="left:1377.00px;width:300px;text-align:center;top:454.40px;font-size:16.6px;color:#ffffff;font-weight:normal;letter-spacing:0.466px;-webkit-text-stroke:0.35px #ffffff;">On-hold</div>
<div class="t" style="left:451.70px;top:497.59px;font-size:17.2px;color:#323338;font-weight:normal;letter-spacing:-0.197px;">Launch PPC campaign</div>
<svg class="r" style="left:858.7px;top:493.4px;" width="26" height="26" viewBox="0 0 26 26"><path d="M13 3.2 C18.6 3.2 22.8 7.4 22.8 12.7 C22.8 18 18.6 22.2 13 22.2 C11.3 22.2 9.8 21.8 8.4 21.1 L4 22.6 L5.3 18.6 C4 17 3.2 14.9 3.2 12.7 C3.2 7.4 7.4 3.2 13 3.2 Z" fill="none" stroke="#c3c6d4" stroke-width="1.6" stroke-linejoin="round"/>
<line x1="13" y1="8.3" x2="13" y2="17" stroke="#c3c6d4" stroke-width="1.6" stroke-linecap="round"/>
<line x1="8.6" y1="12.7" x2="17.4" y2="12.7" stroke="#c3c6d4" stroke-width="1.6" stroke-linecap="round"/></svg>
<svg class="r" style="left:955.70px;top:490.35px;" width="31.20" height="31.20" viewBox="0 0 40 40"><defs><filter id="b5" x="-20%" y="-20%" width="140%" height="140%"><feGaussianBlur stdDeviation="0.9"/></filter><clipPath id="c5"><circle cx="20" cy="20" r="20"/></clipPath></defs><g clip-path="url(#c5)"><g filter="url(#b5)"><rect width="40" height="40" fill="#f7f7f7"/>
<ellipse cx="20" cy="17" rx="6" ry="7.5" fill="#e3b69b"/>
<path d="M13.8 15 C13.5 9 16.5 7.5 20 7.5 C23.5 7.5 26.5 9 26.2 15 C25 11.5 23 11 20 11 C17 11 15 11.5 13.8 15Z" fill="#1d1917"/>
<path d="M17 21 C18.5 22.5 21.5 22.5 23 21" stroke="#ffffff" stroke-width="1.2" fill="none"/>
<path d="M6 35 C9 28 14 27 20 27 C26 27 31 28 34 35 C28 38 12 38 6 35Z" fill="#1a1a1c"/></g></g></svg>
<div class="t" style="left:954.50px;width:300px;text-align:center;top:498.44px;font-size:16.2px;color:#323338;font-weight:normal;">$7,500</div>
<div class="r" style="left:1178.0px;top:482.9px;width:147.9px;height:45.1px;background:#00c875;"></div>
<div class="r" style="left:1178.1px;top:483.0px;width:1.0px;height:44.9px;background:rgba(255,255,255,0.55);"></div>
<div class="r" style="left:1178.1px;top:483.0px;width:147.7px;height:1.0px;background:rgba(255,255,255,0.55);"></div>
<div class="t" style="left:1101.76px;width:300px;text-align:center;top:498.10px;font-size:16.6px;color:#ffffff;font-weight:normal;letter-spacing:0.386px;-webkit-text-stroke:0.35px #ffffff;">Done</div>
<div class="r" style="left:1324.7px;top:482.9px;width:131.6px;height:45.1px;background:#ffcb00;"></div>
<div class="r" style="left:1324.8px;top:483.0px;width:1.0px;height:44.9px;background:rgba(255,255,255,0.55);"></div>
<div class="r" style="left:1324.8px;top:483.0px;width:131.4px;height:1.0px;background:rgba(255,255,255,0.55);"></div>
<div class="t" style="left:1240.85px;width:300px;text-align:center;top:498.10px;font-size:16.6px;color:#ffffff;font-weight:normal;letter-spacing:0.466px;-webkit-text-stroke:0.35px #ffffff;">On-hold</div>
<div class="r" style="left:1455.1px;top:482.9px;width:143.1px;height:45.1px;background:#fdab3d;"></div>
<div class="r" style="left:1455.2px;top:483.0px;width:1.0px;height:44.9px;background:rgba(255,255,255,0.55);"></div>
<div class="r" style="left:1455.2px;top:483.0px;width:142.9px;height:1.0px;background:rgba(255,255,255,0.55);"></div>
<div class="t" style="left:1376.58px;width:300px;text-align:center;top:498.10px;font-size:16.6px;color:#ffffff;font-weight:normal;letter-spacing:0.257px;-webkit-text-stroke:0.35px #ffffff;">Working on it</div>
<div class="t" style="left:451.70px;top:541.49px;font-size:17.2px;color:#323338;font-weight:normal;letter-spacing:0.135px;">Build out podcast pipeline</div>
<svg class="r" style="left:858.7px;top:537.3px;" width="26" height="26" viewBox="0 0 26 26"><path d="M13 3.2 C18.6 3.2 22.8 7.4 22.8 12.7 C22.8 18 18.6 22.2 13 22.2 C11.3 22.2 9.8 21.8 8.4 21.1 L4 22.6 L5.3 18.6 C4 17 3.2 14.9 3.2 12.7 C3.2 7.4 7.4 3.2 13 3.2 Z" fill="none" stroke="#c3c6d4" stroke-width="1.6" stroke-linejoin="round"/>
<line x1="13" y1="8.3" x2="13" y2="17" stroke="#c3c6d4" stroke-width="1.6" stroke-linecap="round"/>
<line x1="8.6" y1="12.7" x2="17.4" y2="12.7" stroke="#c3c6d4" stroke-width="1.6" stroke-linecap="round"/></svg>
<svg class="r" style="left:955.70px;top:534.25px;" width="31.20" height="31.20" viewBox="0 0 40 40"><defs><filter id="b6" x="-20%" y="-20%" width="140%" height="140%"><feGaussianBlur stdDeviation="0.9"/></filter><clipPath id="c6"><circle cx="20" cy="20" r="20"/></clipPath></defs><g clip-path="url(#c6)"><g filter="url(#b6)"><rect width="40" height="40" fill="#8d8a72"/>
<rect x="0" y="0" width="10" height="40" fill="#6f6a55"/>
<ellipse cx="34" cy="18" rx="5" ry="7" fill="#c98c74"/>
<path d="M8 40 C6 24 9 5 20 4 C30 5 32 20 30 40 Z" fill="#6a5038"/>
<ellipse cx="19.5" cy="17" rx="7.2" ry="9.5" fill="#dcbca6"/>
<path d="M21 8 C27 10 28 20 25 27 C23 26 24 16 21 8Z" fill="#45d08f"/>
<path d="M3 40 C5 32 12 29 20 30 C28 29 33 31 36 40Z" fill="#3b332c"/>
<path d="M27 27 C32 26 38 28 40 32 L40 40 L29 40Z" fill="#2c6a50"/></g></g></svg>
<div class="t" style="left:954.50px;width:300px;text-align:center;top:542.34px;font-size:16.2px;color:#323338;font-weight:normal;">$2,000</div>
<div class="r" style="left:1178.0px;top:526.8px;width:147.9px;height:45.1px;background:#e03a53;"></div>
<div class="r" style="left:1178.1px;top:526.9px;width:1.0px;height:44.9px;background:rgba(255,255,255,0.55);"></div>
<div class="r" style="left:1178.1px;top:526.9px;width:147.7px;height:1.0px;background:rgba(255,255,255,0.55);"></div>
<div class="t" style="left:1101.76px;width:300px;text-align:center;top:542.00px;font-size:16.6px;color:#ffffff;font-weight:normal;letter-spacing:0.324px;-webkit-text-stroke:0.35px #ffffff;">Stuck</div>
<div class="r" style="left:1324.7px;top:526.8px;width:131.6px;height:45.1px;background:#fdab3d;"></div>
<div class="r" style="left:1324.8px;top:526.9px;width:1.0px;height:44.9px;background:rgba(255,255,255,0.55);"></div>
<div class="r" style="left:1324.8px;top:526.9px;width:131.4px;height:1.0px;background:rgba(255,255,255,0.55);"></div>
<div class="t" style="left:1240.43px;width:300px;text-align:center;top:542.00px;font-size:16.6px;color:#ffffff;font-weight:normal;letter-spacing:0.257px;-webkit-text-stroke:0.35px #ffffff;">Working on it</div>
<div class="r" style="left:1455.1px;top:526.8px;width:143.1px;height:45.1px;background:#579bfc;"></div>
<div class="r" style="left:1455.2px;top:526.9px;width:1.0px;height:44.9px;background:rgba(255,255,255,0.55);"></div>
<div class="r" style="left:1455.2px;top:526.9px;width:142.9px;height:1.0px;background:rgba(255,255,255,0.55);"></div>
<div class="t" style="left:1376.32px;width:300px;text-align:center;top:542.00px;font-size:16.6px;color:#ffffff;font-weight:normal;letter-spacing:0.121px;-webkit-text-stroke:0.35px #ffffff;">Planning</div>
<div class="t" style="left:444.00px;top:584.68px;font-size:17.45px;color:#676879;font-weight:normal;letter-spacing:-0.010px;">+ Add Item</div>
<div class="r" style="left:368.0px;top:616.2px;width:542.0px;height:5.8px;background:linear-gradient(rgba(40,40,60,0.045),rgba(40,40,60,0));"></div>
<div class="r" style="left:914.0px;top:660.5px;width:683.0px;height:6.5px;background:linear-gradient(rgba(40,40,60,0.045),rgba(40,40,60,0));"></div>
<div class="r" style="left:910.1px;top:615.2px;width:688.1px;height:44.9px;background:transparent;border:1.2px solid #d3d4da;border-top:none;border-bottom-left-radius:6px;box-sizing:border-box;"></div>
<div class="r" style="left:1030.0px;top:615.2px;width:1.2px;height:44.3px;background:#d3d4da;"></div>
<div class="r" style="left:1178.0px;top:615.2px;width:1.2px;height:44.3px;background:#d3d4da;"></div>
<div class="r" style="left:1325.0px;top:615.2px;width:1.2px;height:44.3px;background:#d3d4da;"></div>
<div class="r" style="left:1455.0px;top:615.2px;width:1.2px;height:44.3px;background:#d3d4da;"></div>
<div class="t" style="left:954.96px;width:300px;text-align:center;top:624.06px;font-size:17.3px;color:#323338;font-weight:normal;letter-spacing:0.107px;">$22,500</div>
<div class="t" style="left:955.61px;width:300px;text-align:center;top:640.98px;font-size:14.2px;color:#4b4c55;font-weight:normal;letter-spacing:0.808px;">sum</div>
<div class="r" style="left:1188.8px;top:623.7px;width:94.1px;height:29.1px;background:#00c875;"></div>
<div class="r" style="left:1282.9px;top:623.7px;width:31.7px;height:29.1px;background:#e03a53;"></div>
<div class="r" style="left:1335.3px;top:623.7px;width:55.1px;height:29.1px;background:#00c875;"></div>
<div class="r" style="left:1390.4px;top:623.7px;width:28.2px;height:29.1px;background:#fdab3d;"></div>
<div class="r" style="left:1418.6px;top:623.7px;width:26.9px;height:29.1px;background:#ffcb00;"></div>
<div class="r" style="left:1465.7px;top:623.7px;width:30.9px;height:29.1px;background:#00c875;"></div>
<div class="r" style="left:1496.6px;top:623.7px;width:30.9px;height:29.1px;background:#fdab3d;"></div>
<div class="r" style="left:1527.5px;top:623.7px;width:29.1px;height:29.1px;background:#579bfc;"></div>
<div class="r" style="left:1556.6px;top:623.7px;width:30.6px;height:29.1px;background:#ffcb00;"></div>
<svg class="r" style="left:379.0px;top:713.8px;" width="17" height="12" viewBox="0 0 17 12"><path d="M2.6 3 L8.6 9.2 L14.6 3" fill="none" stroke="#9d50dd" stroke-width="1.8" stroke-linecap="round" stroke-linejoin="round"/></svg>
<svg class="r" style="left:0;top:0;" width="460" height="744.8" viewBox="0 0 460 744.8"><circle cx="419.4" cy="719.5999999999999" r="6.75" fill="none" stroke="#9d50dd" stroke-width="2.4"/><line x1="422.3" y1="726.0" x2="426.4" y2="729.4" stroke="#9d50dd" stroke-width="2.4" stroke-linecap="round"/><path d="M430.4 716.4 C430.6 713.5999999999999 432.4 712.0999999999999 434.8 712.0999999999999 C437.4 712.0999999999999 439.2 713.8 439.2 716.1999999999999 C439.2 718.3 438.0 719.5999999999999 436.2 721.0999999999999 L430.9 726.0 L440.2 726.0" fill="none" stroke="#9d50dd" stroke-width="2.4" stroke-linejoin="miter"/></svg>
<div class="r" style="left:363.0px;top:744.8px;width:7.0px;height:130.5px;background:#9d50dd;border-top-left-radius:6px;"></div>
<div class="r" style="left:363.0px;top:875.3px;width:7.0px;height:43.7px;background:#d3a9f2;border-bottom-left-radius:6px;"></div>
<div class="r" style="left:370.0px;top:744.0px;width:1228.2px;height:1.2px;background:#d3d4da;"></div>
<div class="r" style="left:370.0px;top:788.0px;width:1228.2px;height:1.2px;background:#d3d4da;"></div>
<div class="r" style="left:370.0px;top:831.0px;width:1228.2px;height:1.2px;background:#d3d4da;"></div>
<div class="r" style="left:370.0px;top:875.0px;width:1228.2px;height:1.2px;background:#d3d4da;"></div>
<div class="r" style="left:370.0px;top:918.0px;width:1228.2px;height:1.2px;background:#d3d4da;"></div>
<div class="r" style="left:409.0px;top:744.8px;width:1.2px;height:130.5px;background:#d3d4da;"></div>
<div class="r" style="left:910.0px;top:744.8px;width:1.2px;height:130.5px;background:#d3d4da;"></div>
<div class="r" style="left:1030.0px;top:744.8px;width:1.2px;height:130.5px;background:#d3d4da;"></div>
<div class="r" style="left:1178.0px;top:744.8px;width:1.2px;height:130.5px;background:#d3d4da;"></div>
<div class="r" style="left:1325.0px;top:744.8px;width:1.2px;height:130.5px;background:#d3d4da;"></div>
<div class="r" style="left:1455.0px;top:744.8px;width:1.2px;height:130.5px;background:#d3d4da;"></div>
<div class="r" style="left:1597.0px;top:744.8px;width:1.2px;height:130.5px;background:#d3d4da;"></div>
<div class="r" style="left:409.0px;top:875.3px;width:1.2px;height:43.7px;background:#d3d4da;"></div>
<div class="r" style="left:831.0px;top:788.9px;width:1.2px;height:42.9px;background:#d3d4da;"></div>
<div class="r" style="left:831.0px;top:831.8px;width:1.2px;height:43.5px;background:#d3d4da;"></div>
<div class="r" style="left:380.3px;top:757.2px;width:19.3px;height:19.2px;background:#ffffff;border:1px solid #c5c7d0;border-radius:3px;box-sizing:border-box;"></div>
<div class="r" style="left:380.3px;top:800.7px;width:19.3px;height:19.2px;background:#ffffff;border:1px solid #c5c7d0;border-radius:3px;box-sizing:border-box;"></div>
<div class="r" style="left:380.3px;top:843.9px;width:19.3px;height:19.2px;background:#ffffff;border:1px solid #c5c7d0;border-radius:3px;box-sizing:border-box;"></div>
<div class="r" style="left:380.3px;top:887.5px;width:19.3px;height:19.2px;background:#ffffff;border:1px solid #e6e8ef;border-radius:3px;box-sizing:border-box;"></div>
<div class="t" style="left:510.00px;width:300px;text-align:center;top:757.11px;font-size:17px;color:#323338;font-weight:normal;letter-spacing:0.833px;">Item</div>
<div class="t" style="left:820.87px;width:300px;text-align:center;top:758.97px;font-size:16.1px;color:#323338;font-weight:normal;letter-spacing:0.392px;">Person</div>
<div class="t" style="left:954.04px;width:300px;text-align:center;top:758.67px;font-size:17.05px;color:#323338;font-weight:normal;letter-spacing:0.150px;">Budget</div>
<div class="t" style="left:1101.35px;width:300px;text-align:center;top:759.05px;font-size:16.6px;color:#323338;font-weight:normal;letter-spacing:-0.310px;">Phase I</div>
<div class="t" style="left:1240.06px;width:300px;text-align:center;top:759.05px;font-size:16.6px;color:#323338;font-weight:normal;letter-spacing:-0.282px;">Phase II</div>
<div class="t" style="left:1376.34px;width:300px;text-align:center;top:759.05px;font-size:16.6px;color:#323338;font-weight:normal;letter-spacing:-0.323px;">Phase III</div>
<div class="t" style="left:452.70px;top:802.49px;font-size:17.2px;color:#323338;font-weight:normal;letter-spacing:0.007px;">Conduct live events series</div>
<svg class="r" style="left:858.7px;top:798.3px;" width="26" height="26" viewBox="0 0 26 26"><path d="M13 3.2 C18.6 3.2 22.8 7.4 22.8 12.7 C22.8 18 18.6 22.2 13 22.2 C11.3 22.2 9.8 21.8 8.4 21.1 L4 22.6 L5.3 18.6 C4 17 3.2 14.9 3.2 12.7 C3.2 7.4 7.4 3.2 13 3.2 Z" fill="none" stroke="#c3c6d4" stroke-width="1.6" stroke-linejoin="round"/>
<line x1="13" y1="8.3" x2="13" y2="17" stroke="#c3c6d4" stroke-width="1.6" stroke-linecap="round"/>
<line x1="8.6" y1="12.7" x2="17.4" y2="12.7" stroke="#c3c6d4" stroke-width="1.6" stroke-linecap="round"/></svg>
<svg class="r" style="left:955.70px;top:795.25px;" width="31.20" height="31.20" viewBox="0 0 40 40"><defs><filter id="b7" x="-20%" y="-20%" width="140%" height="140%"><feGaussianBlur stdDeviation="0.9"/></filter><clipPath id="c7"><circle cx="20" cy="20" r="20"/></clipPath></defs><g clip-path="url(#c7)"><g filter="url(#b7)"><rect width="40" height="40" fill="#8d8a72"/>
<rect x="0" y="0" width="10" height="40" fill="#6f6a55"/>
<ellipse cx="34" cy="18" rx="5" ry="7" fill="#c98c74"/>
<path d="M8 40 C6 24 9 5 20 4 C30 5 32 20 30 40 Z" fill="#6a5038"/>
<ellipse cx="19.5" cy="17" rx="7.2" ry="9.5" fill="#dcbca6"/>
<path d="M21 8 C27 10 28 20 25 27 C23 26 24 16 21 8Z" fill="#45d08f"/>
<path d="M3 40 C5 32 12 29 20 30 C28 29 33 31 36 40Z" fill="#3b332c"/>
<path d="M27 27 C32 26 38 28 40 32 L40 40 L29 40Z" fill="#2c6a50"/></g></g></svg>
<div class="t" style="left:954.50px;width:300px;text-align:center;top:803.34px;font-size:16.2px;color:#323338;font-weight:normal;">$10,000</div>
<div class="r" style="left:1178.0px;top:788.3px;width:147.9px;height:44.1px;background:#fdab3d;"></div>
<div class="r" style="left:1178.1px;top:788.4px;width:1.0px;height:43.9px;background:rgba(255,255,255,0.55);"></div>
<div class="r" style="left:1178.1px;top:788.4px;width:147.7px;height:1.0px;background:rgba(255,255,255,0.55);"></div>
<div class="t" style="left:1101.88px;width:300px;text-align:center;top:803.00px;font-size:16.6px;color:#ffffff;font-weight:normal;letter-spacing:0.257px;-webkit-text-stroke:0.35px #ffffff;">Working on it</div>
<div class="r" style="left:1324.7px;top:788.3px;width:131.6px;height:44.1px;background:#fdab3d;"></div>
<div class="r" style="left:1324.8px;top:788.4px;width:1.0px;height:43.9px;background:rgba(255,255,255,0.55);"></div>
<div class="r" style="left:1324.8px;top:788.4px;width:131.4px;height:1.0px;background:rgba(255,255,255,0.55);"></div>
<div class="t" style="left:1240.43px;width:300px;text-align:center;top:803.00px;font-size:16.6px;color:#ffffff;font-weight:normal;letter-spacing:0.257px;-webkit-text-stroke:0.35px #ffffff;">Working on it</div>
<div class="r" style="left:1455.1px;top:788.3px;width:143.1px;height:44.1px;background:#fdab3d;"></div>
<div class="r" style="left:1455.2px;top:788.4px;width:1.0px;height:43.9px;background:rgba(255,255,255,0.55);"></div>
<div class="r" style="left:1455.2px;top:788.4px;width:142.9px;height:1.0px;background:rgba(255,255,255,0.55);"></div>
<div class="t" style="left:1376.58px;width:300px;text-align:center;top:803.00px;font-size:16.6px;color:#ffffff;font-weight:normal;letter-spacing:0.257px;-webkit-text-stroke:0.35px #ffffff;">Working on it</div>
<div class="t" style="left:452.70px;top:845.69px;font-size:17.2px;color:#323338;font-weight:normal;letter-spacing:0.222px;">Content pipeline</div>
<svg class="r" style="left:858.7px;top:841.5px;" width="26" height="26" viewBox="0 0 26 26"><path d="M13 3.2 C18.6 3.2 22.8 7.4 22.8 12.7 C22.8 18 18.6 22.2 13 22.2 C11.3 22.2 9.8 21.8 8.4 21.1 L4 22.6 L5.3 18.6 C4 17 3.2 14.9 3.2 12.7 C3.2 7.4 7.4 3.2 13 3.2 Z" fill="none" stroke="#c3c6d4" stroke-width="1.6" stroke-linejoin="round"/>
<line x1="13" y1="8.3" x2="13" y2="17" stroke="#c3c6d4" stroke-width="1.6" stroke-linecap="round"/>
<line x1="8.6" y1="12.7" x2="17.4" y2="12.7" stroke="#c3c6d4" stroke-width="1.6" stroke-linecap="round"/></svg>
<svg class="r" style="left:955.70px;top:838.45px;" width="31.20" height="31.20" viewBox="0 0 40 40"><defs><filter id="b8" x="-20%" y="-20%" width="140%" height="140%"><feGaussianBlur stdDeviation="0.9"/></filter><clipPath id="c8"><circle cx="20" cy="20" r="20"/></clipPath></defs><g clip-path="url(#c8)"><g filter="url(#b8)"><rect width="40" height="40" fill="#1c1c1c"/>
<ellipse cx="21" cy="21" rx="11" ry="14" fill="#b5b5b5"/>
<ellipse cx="22" cy="18" rx="7" ry="8" fill="#d2d2d2"/>
<path d="M6 8 C10 2 22 1 30 6 C24 6 16 8 12 14 C10 20 10 30 8 40 L0 40 L0 10Z" fill="#151515"/>
<path d="M15 25 C18 29.5 24 29.5 27.5 25" stroke="#eeeeee" stroke-width="2.4" fill="none"/>
<path d="M14 24 C17 31 25 31 28.5 24" stroke="#555" stroke-width="0.9" fill="none"/></g></g></svg>
<div class="t" style="left:954.50px;width:300px;text-align:center;top:846.54px;font-size:16.2px;color:#323338;font-weight:normal;">$1,500</div>
<div class="r" style="left:1178.0px;top:831.2px;width:147.9px;height:44.7px;background:#00c875;"></div>
<div class="r" style="left:1178.1px;top:831.3px;width:1.0px;height:44.5px;background:rgba(255,255,255,0.55);"></div>
<div class="r" style="left:1178.1px;top:831.3px;width:147.7px;height:1.0px;background:rgba(255,255,255,0.55);"></div>
<div class="t" style="left:1101.76px;width:300px;text-align:center;top:846.20px;font-size:16.6px;color:#ffffff;font-weight:normal;letter-spacing:0.386px;-webkit-text-stroke:0.35px #ffffff;">Done</div>
<div class="r" style="left:1324.7px;top:831.2px;width:131.6px;height:44.7px;background:#fdab3d;"></div>
<div class="r" style="left:1324.8px;top:831.3px;width:1.0px;height:44.5px;background:rgba(255,255,255,0.55);"></div>
<div class="r" style="left:1324.8px;top:831.3px;width:131.4px;height:1.0px;background:rgba(255,255,255,0.55);"></div>
<div class="t" style="left:1240.43px;width:300px;text-align:center;top:846.20px;font-size:16.6px;color:#ffffff;font-weight:normal;letter-spacing:0.257px;-webkit-text-stroke:0.35px #ffffff;">Working on it</div>
<div class="r" style="left:1455.1px;top:831.2px;width:143.1px;height:44.7px;background:#ffcb00;"></div>
<div class="r" style="left:1455.2px;top:831.3px;width:1.0px;height:44.5px;background:rgba(255,255,255,0.55);"></div>
<div class="r" style="left:1455.2px;top:831.3px;width:142.9px;height:1.0px;background:rgba(255,255,255,0.55);"></div>
<div class="t" style="left:1377.00px;width:300px;text-align:center;top:846.20px;font-size:16.6px;color:#ffffff;font-weight:normal;letter-spacing:0.466px;-webkit-text-stroke:0.35px #ffffff;">On-hold</div>
<div class="t" style="left:444.00px;top:888.58px;font-size:17.45px;color:#676879;font-weight:normal;letter-spacing:-0.010px;">+ Add Item</div>
<svg class="r" style="left:1580px;top:880px;" width="20" height="34" viewBox="0 0 20 34"><path d="M20 14 C19 22 17 29 13 34 L20 34 Z" fill="#141416"/></svg>
</body></html>
